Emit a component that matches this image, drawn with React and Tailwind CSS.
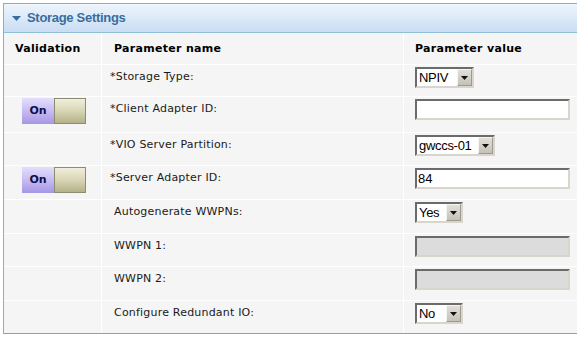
import React from 'react'

const rows = [
  { label: 'Storage Type:', req: true, h: 'h-[32px]', ctrl: { type: 'select', value: 'NPIV', w: 'w-[59px]' } },
  { label: 'Client Adapter ID:', req: true, h: 'h-[36px]', toggle: true, ctrl: { type: 'input', value: '' } },
  { label: 'VIO Server Partition:', req: true, h: 'h-[33px]', ctrl: { type: 'select', value: 'gwccs-01', w: 'w-[80px]' } },
  { label: 'Server Adapter ID:', req: true, h: 'h-[34px]', toggle: true, ctrl: { type: 'input', value: '84' } },
  { label: 'Autogenerate WWPNs:', h: 'h-[34px]', ctrl: { type: 'select', value: 'Yes', w: 'w-[48px]' } },
  { label: 'WWPN 1:', h: 'h-[33px]', ctrl: { type: 'input', value: '', disabled: true } },
  { label: 'WWPN 2:', h: 'h-[34px]', ctrl: { type: 'input', value: '', disabled: true } },
  { label: 'Configure Redundant IO:', h: 'h-[32px]', last: true, ctrl: { type: 'select', value: 'No', w: 'w-[48px]' } },
]

const inset = 'border-2 border-t-[#6b6b6b] border-l-[#6b6b6b] border-b-[#d8d5cc] border-r-[#d8d5cc]'

function Select({ value, w }) {
  return (
    <div className={`${w} h-[21px] ${inset} bg-white flex items-stretch`}>
      <span className="flex-1 pl-[2px] text-[13px] leading-[17px] text-black tracking-[-0.3px] font-['Liberation_Sans',Arial,sans-serif]">
        {value}
      </span>
      <span className="w-[15px] bg-gradient-to-b from-[#e2e0da] to-[#c4c1b8] border border-[#f4f4f0] border-b-[#9d9a90] border-r-[#9d9a90] flex items-center justify-center">
        <svg width="7" height="4" viewBox="0 0 7 4"><path d="M0 0h7L3.5 4z" fill="#111" /></svg>
      </span>
    </div>
  )
}

function Input({ value, disabled }) {
  return (
    <div className={`w-[155px] h-[21px] ${inset} ${disabled ? 'bg-[#dcdcdc]' : 'bg-white'} pl-[1px] text-[13px] leading-[17px] text-black font-['Liberation_Sans',Arial,sans-serif]`}>
      {value}
    </div>
  )
}

function Toggle() {
  return (
    <div className="ml-[18px] mt-[1px] flex h-[26px]">
      <div className="w-[32px] h-full bg-gradient-to-b from-[#e4defc] via-[#c6bcf4] to-[#a596e4] flex items-center justify-center text-[11px] font-bold text-[#10104a] font-['DejaVu_Sans',Verdana,sans-serif]">
        On
      </div>
      <div className="w-[32px] h-full border border-[#8e8c70] bg-gradient-to-b from-[#f1efdc] via-[#d8d5b4] to-[#b5b18a]" />
    </div>
  )
}

export default function App() {
  return (
    <div className="w-[577px] h-[338px] bg-white pt-[3px] pl-[3px] font-['DejaVu_Sans',Verdana,sans-serif] overflow-hidden">
      <div className="border-l border-t border-b border-[#7db4cf] border-b-[#6aaed2] bg-[#f5f5f5]">
        {/* section header */}
        <div className="h-[29px] border-b border-[#8fbfd6] bg-gradient-to-b from-[#eef5fc] to-[#c9ddf4] flex items-center pl-[8px] gap-[6px]">
          <svg width="9" height="5" viewBox="0 0 9 5"><path d="M0 0h9L4.5 5z" fill="#3c6e9d" /></svg>
          <span className="text-[13px] font-bold tracking-[-0.3px] text-[#3a6d9c] font-['Liberation_Sans',Tahoma,sans-serif]">Storage Settings</span>
        </div>

        {/* column headings */}
        <div className="flex h-[32px] border-b border-white text-[11px] font-bold text-black tracking-[0.3px]">
          <div className="w-[98px] border-r border-white pl-[11px] flex items-center pt-[2px]">Validation</div>
          <div className="w-[302px] border-r border-white pl-[12px] flex items-center pt-[2px]">Parameter name</div>
          <div className="flex-1 pl-[11px] flex items-center pt-[2px]">Parameter value</div>
        </div>

        {rows.map((r) => (
          <div key={r.label} className={`flex ${r.h} ${r.last ? '' : 'border-b border-white'} text-[11px] text-[#1a1a1a]`}>
            <div className="w-[98px] border-r border-white">
              {r.toggle && <Toggle />}
            </div>
            <div className="w-[302px] border-r border-white pl-[12px] pt-[2px]">
              <div className="h-[21px] flex items-center tracking-[0.2px]">
                {r.req ? <span className="-ml-[4px]">*</span> : null}
                {r.label}
              </div>
            </div>
            <div className="flex-1 pl-[11px] pt-[2px]">
              {r.ctrl.type === 'select' ? <Select value={r.ctrl.value} w={r.ctrl.w} /> : <Input value={r.ctrl.value} disabled={r.ctrl.disabled} />}
            </div>
          </div>
        ))}
      </div>
    </div>
  )
}
